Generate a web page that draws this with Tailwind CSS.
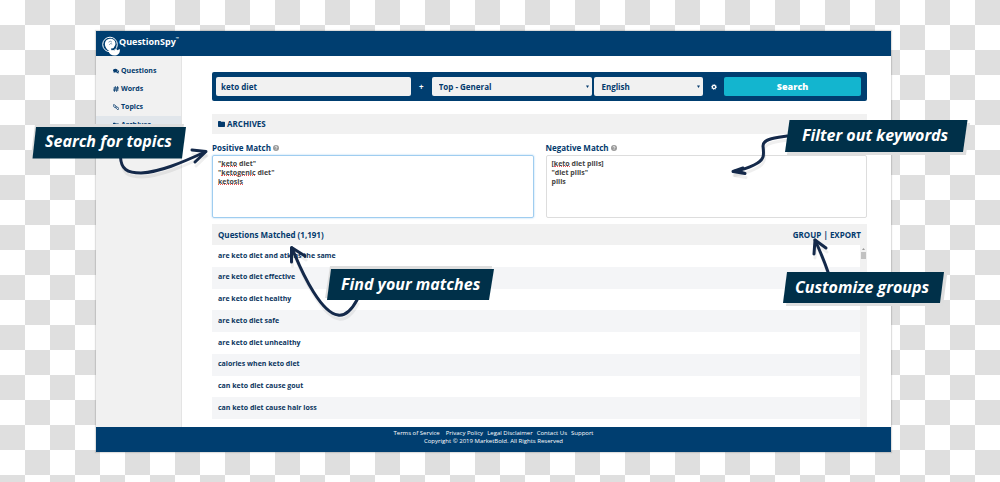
<!DOCTYPE html>
<html lang="en">
<head>
<meta charset="utf-8">
<title>QuestionSpy</title>
<script src="https://cdn.jsdelivr.net/npm/@tailwindcss/browser@4"></script>
</head>
<body class="relative min-h-screen overflow-x-hidden bg-[repeating-conic-gradient(#dfdfdf_0_25%,#fff_0_50%)] bg-[size:50px_50px] pt-[31px] pr-[109px] pb-[30px] pl-24 font-['Open_Sans','Noto_Sans',sans-serif] text-[#033a6d]">
<div class="flex flex-col bg-white shadow-[0_0_1px_1px_#00000020]">
  <header class="flex h-[25px] items-center bg-[#003e70] pl-1.5 text-white">
    <svg class="mt-1 h-5 w-[18px] shrink-0" viewBox="0 0 18 20" fill="none" aria-hidden="true">
      <circle cx="8" cy="8.500" r="7.300" stroke="#fff" stroke-width="1"/>
      <path d="M3.200 10C2.200 6 4.300 2.900 8 2.700c3.700-.2 6 2.500 5.400 6l-1.800 3.300-1.600.5L9 15.800C6.500 15 4 13 3.200 10z" fill="#fff"/>
      <path d="M6.500 6.200l1.800-1 1.700 1M7.200 8.800l1.500-1.300 1.500.6" stroke="#003e70" stroke-width=".5"/>
      <path d="M6.500 15.600l3.500-1.600 2.500.7 1.500-2 1.500 1.500 2.200-1.200c.9 4-1.700 6.400-5.200 6.600-2.800.1-5-1.500-6-4z" fill="#fff"/>
      <path d="M9.500 12.500l.5 1.500M12.500 11l.5 2" stroke="#003e70" stroke-width="1"/>
    </svg>
    <span class="-mt-1 -ml-px flex items-start text-[9px] leading-[14px] font-bold">QuestionSpy<sup class="top-0 text-[4px] leading-[8px]">™</sup></span>
  </header>

  <div class="flex">
    <nav class="w-[86px] shrink-0 border-r border-[#e4e4e4] bg-[#f1f1f1] pt-1.5 text-[7px] leading-[18px] font-bold" aria-label="Main">
      <a href="#" class="flex items-center gap-0.5 pl-[17px]">
        <svg class="size-[6px]" viewBox="0 0 14 12" fill="currentColor" aria-hidden="true"><path d="M5.500 1C8.500 1 11 2.700 11 5S8.500 9 5.500 9L4.500 9C3.500 10 2 10.300 1 10.200L2 8.300C.8 7.500 0 6.300 0 5 0 2.700 2.500 1 5.500 1z"/><path d="M12 4c1.200.7 2 1.700 2 3 0 1.200-.7 2.200-1.700 3l.9 1.800c-1.200 0-2.400-.4-3.200-1.200-2 .3-3.800 0-5-.8C9 10 12 8 12 4z"/></svg>Questions</a>
      <a href="#" class="flex items-center gap-0.5 pl-[17px]">
        <svg class="size-[6px]" viewBox="0 0 12 12" fill="none" stroke="currentColor" stroke-width="1.900" aria-hidden="true"><path d="M4.800.5l-2 11M9.200.5l-2 11M1 4h11M0 8h11"/></svg>Words</a>
      <a href="#" class="flex items-center gap-0.5 pl-[17px]">
        <svg class="size-[6px]" viewBox="0 0 12 12" fill="none" stroke="currentColor" stroke-width="1.700" aria-hidden="true"><rect x="-.2" y="2.200" width="6.500" height="3.600" rx="1.800" transform="rotate(45 3 4)"/><rect x="5.400" y="6.500" width="6.500" height="3.600" rx="1.800" transform="rotate(45 8.600 8.300)"/></svg>Topics</a>
      <a href="#" class="flex items-center gap-0.5 bg-[#e1e6eb] pl-[17px]">
        <svg class="size-[6px]" viewBox="0 0 14 12" fill="currentColor" aria-hidden="true"><path d="M0 2.500Q0 1 1.500 1h3Q6 1 6 2.500h6.500Q14 2.500 14 4v5.500Q14 11 12.500 11h-11Q0 11 0 9.500z"/></svg>Archives</a>
    </nav>

    <main class="min-w-0 flex-1 pt-4 pr-6 pl-[30px]">
      <form class="flex h-[29px] items-center rounded-xs bg-[#003e70] px-1 text-[8px] font-bold" onsubmit="return false">
        <div class="flex min-w-0 flex-[195]">
          <input aria-label="Keyword" value="keto diet" class="h-[19px] w-full rounded-xs bg-[#f1f1f1] px-[5px]">
        </div>
        <span class="w-[21px] text-center text-white" aria-hidden="true">+</span>
        <div class="relative flex min-w-0 flex-[161]">
          <select aria-label="Category" class="h-[19px] w-full appearance-none rounded-xs bg-[#f1f1f1] px-[7px]"><option>Top - General</option></select>
          <svg class="absolute top-2 right-[3px] size-[3px]" viewBox="0 0 4 4" fill="#033a6d" aria-hidden="true"><path d="M0 .5h4L2 4z"/></svg>
        </div>
        <div class="relative ml-0.5 flex min-w-0 flex-[109]">
          <select aria-label="Language" class="h-[19px] w-full appearance-none rounded-xs bg-[#f1f1f1] px-[7px]"><option>English</option></select>
          <svg class="absolute top-2 right-[3px] size-[3px]" viewBox="0 0 4 4" fill="#033a6d" aria-hidden="true"><path d="M0 .5h4L2 4z"/></svg>
        </div>
        <button type="button" aria-label="Settings" class="flex w-[21px] justify-center">
          <svg class="size-[6px]" viewBox="0 0 12 12" fill="none" stroke="#fff" aria-hidden="true"><circle cx="6" cy="6" r="3.300" stroke-width="2.400"/><circle cx="6" cy="6" r="5" stroke-width="1.600" stroke-dasharray="2 1.930"/></svg>
        </button>
        <button class="mr-0.5 h-[19px] min-w-0 flex-[137] rounded-xs bg-[#13b5cf] text-[9px] font-extrabold text-white">Search</button>
      </form>

      <h1 class="mt-[13px] flex h-5 items-center gap-0.5 bg-[#f1f1f1] pl-1.5 text-[8px] font-bold">
        <svg class="h-[6px] w-[7px]" viewBox="0 0 14 12" fill="currentColor" aria-hidden="true"><path d="M0 1.500Q0 0 1.500 0h3Q6 0 6 1.500h6.500Q14 1.500 14 3v7.500Q14 12 12.500 12h-11Q0 12 0 10.500z"/></svg>ARCHIVES</h1>

      <div class="mt-2 grid grid-cols-2 gap-3">
        <div>
          <div class="flex items-center gap-0.5">
            <label for="positive" class="text-[8px] leading-[12px] font-bold">Positive Match</label>
            <svg class="size-[6px]" viewBox="0 0 12 12" aria-hidden="true"><circle cx="6" cy="6" r="6" fill="#999"/><path d="M4 4.600Q4.200 3 6 3t2 1.600Q8 5.700 6 6.600v.7M6 8.300v1.400" fill="none" stroke="#fff" stroke-width="1.500"/></svg>
          </div>
          <div class="relative mt-px flex">
            <textarea id="positive" spellcheck="false" class="h-[63px] w-full resize-none rounded-xs border border-[#9fcdf0] px-[5px] py-[3px] text-[7px] leading-[9px] font-bold text-[#444] shadow-[0_0_2px_#9fcdf0]">"keto diet"
"ketogenic diet"
ketosis</textarea>
            <i class="absolute top-[11px] left-[9px] w-4 border-b border-dotted border-[#e55]"></i>
            <i class="absolute top-[20px] left-[9px] w-[34px] border-b border-dotted border-[#e55]"></i>
            <i class="absolute top-[29px] left-1.5 w-[25px] border-b border-dotted border-[#e55]"></i>
          </div>
        </div>
        <div>
          <div class="flex items-center gap-0.5">
            <label for="negative" class="text-[8px] leading-[12px] font-bold">Negative Match</label>
            <svg class="size-[6px]" viewBox="0 0 12 12" aria-hidden="true"><circle cx="6" cy="6" r="6" fill="#999"/><path d="M4 4.600Q4.200 3 6 3t2 1.600Q8 5.700 6 6.600v.7M6 8.300v1.400" fill="none" stroke="#fff" stroke-width="1.500"/></svg>
          </div>
          <div class="relative mt-px flex">
            <textarea id="negative" spellcheck="false" class="h-[63px] w-full resize-none rounded-xs border border-[#ddd] px-[5px] py-[3px] text-[7px] leading-[9px] font-bold text-[#444]">[keto diet pills]
"diet pills"
pills</textarea>
            <i class="absolute top-[11px] left-2 w-4 border-b border-dotted border-[#e55]"></i>
          </div>
        </div>
      </div>

      <div class="mt-1.5 flex h-[21px] items-center justify-between bg-[#f1f1f1] px-1.5 text-[8px] font-bold">
        <h2>Questions Matched (1,191)</h2>
        <div><a href="#">GROUP</a> | <a href="#">EXPORT</a></div>
      </div>
      <div class="flex h-[182px]">
        <ul class="flex h-[174px] flex-1 flex-col text-[7px] font-bold text-[#0b3560]">
          <li class="flex flex-1 items-center pl-1.5">are keto diet and atkins the same</li>
          <li class="flex flex-1 items-center bg-[#f4f5f7] pl-1.5">are keto diet effective</li>
          <li class="flex flex-1 items-center pl-1.5">are keto diet healthy</li>
          <li class="flex flex-1 items-center bg-[#f4f5f7] pl-1.5">are keto diet safe</li>
          <li class="flex flex-1 items-center pl-1.5">are keto diet unhealthy</li>
          <li class="flex flex-1 items-center bg-[#f4f5f7] pl-1.5">calories when keto diet</li>
          <li class="flex flex-1 items-center pl-1.5">can keto diet cause gout</li>
          <li class="flex flex-1 items-center bg-[#f4f5f7] pl-1.5">can keto diet cause hair loss</li>
        </ul>
        <div class="flex w-[7px] flex-col items-center gap-0.5 bg-[#f1f1f1] pt-[3px]" aria-hidden="true">
          <svg class="h-0.5 w-[3px]" viewBox="0 0 3 2" fill="#999"><path d="M0 2h3L1.500 0z"/></svg>
          <div class="h-[7px] w-[5px] bg-[#c1c1c1]"></div>
        </div>
      </div>
    </main>
  </div>

  <footer class="flex h-[25px] flex-col items-center bg-[#003e70] pt-0.5 text-[6px] leading-[8px] text-white">
    <div class="flex gap-1"><a href="#" class="mr-0.5">Terms of Service</a><a href="#">Privacy Policy</a><a href="#">Legal Disclaimer</a><a href="#">Contact Us</a><a href="#">Support</a></div>
    <p>Copyright © 2019 MarketBold. All Rights Reserved</p>
  </footer>
</div>

<!-- Annotation arrows and callouts -->
<svg class="pointer-events-none absolute top-0 left-0 h-[482px] w-[1000px]" viewBox="0 0 1000 482" fill="none" stroke-linecap="round" stroke-linejoin="round" aria-hidden="true">
  <defs>
    <g id="arrows">
      <path d="M120.500 157C121 169 127 173 141 173C160 172 181 163 205 152"/><path d="M192 150L206 151.500L195 162"/>
      <path d="M787 136C774 138 763 139 763 146C764 155 765 160 754 165C748 168 741 170 734 171.500"/><path d="M743 168L733 171.500L745 173.500L737 171"/>
      <path d="M357 300C351 311 344 316 338 315C322 313 304 278 292 248"/><path d="M291.500 262V247.500L305 256"/>
      <path d="M828 272C824 260 820 251 815 240"/><path d="M814 254L815 240L826 248"/>
    </g>
  </defs>
  <use href="#arrows" x="1" y="4" stroke="#00000010" stroke-width="3"/>
  <use href="#arrows" stroke="#14294a" stroke-width="3"/>
  <g fill="#dedede">
    <path d="M35 124h149l-4 32H31z"/><path d="M791 123h179l-4 32H787z"/><path d="M330 266h162l-4 32H325z"/><path d="M790 275h157l-4 31H786z"/>
  </g>
  <g fill="#003049">
    <path d="M36 127h150l-4 31.500H32.500z"/><path d="M789.500 120h178l-4.500 32H785z"/><path d="M331 269h163l-5 31H327z"/><path d="M787 272h157l-4 31H783z"/>
  </g>
</svg>
<p class="absolute top-[129px] left-[45px] text-[16px] leading-6 font-bold text-white italic">Search for topics</p>
<p class="absolute top-[123px] left-[802px] text-[16px] leading-6 font-bold text-white italic">Filter out keywords</p>
<p class="absolute top-[272px] left-[341px] text-[16px] leading-6 font-bold text-white italic">Find your matches</p>
<p class="absolute top-[275px] left-[795px] text-[16px] leading-6 font-bold text-white italic">Customize groups</p>
</body>
</html>
